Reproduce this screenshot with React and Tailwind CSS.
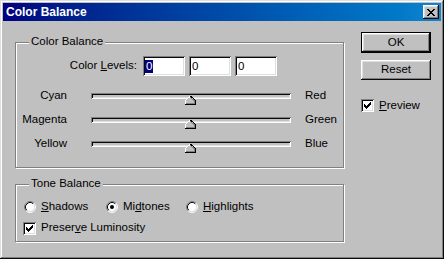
import React from 'react';

const raised =
  'shadow-[inset_-1px_-1px_0_#0a0a0a,inset_1px_1px_0_#fff,inset_-2px_-2px_0_#808080,inset_2px_2px_0_#dfdfdf]';
const sunken =
  'shadow-[inset_1px_1px_0_#808080,inset_-1px_-1px_0_#fff,inset_2px_2px_0_#0a0a0a,inset_-2px_-2px_0_#dfdfdf]';

function Group({ title, className, children }) {
  return (
    <div
      className={`relative border border-[#808080] shadow-[inset_1px_1px_0_#fff,1px_1px_0_#fff] ${className}`}
    >
      <span className="absolute left-[13px] top-[-8px] px-[2px] bg-[#c0c0c0] leading-[13px]">
        {title}
      </span>
      {children}
    </div>
  );
}

function CheckBox() {
  const cols = [2, 3, 4, 3, 2, 1, 0];
  return (
    <div className={`w-[13px] h-[13px] bg-white flex items-center justify-center ${sunken}`}>
      <svg width="7" height="7" viewBox="0 0 7 7" shapeRendering="crispEdges">
        {cols.map((y, x) => (
          <rect key={x} x={x} y={y} width="1" height="3" fill="#000" />
        ))}
      </svg>
    </div>
  );
}

function Radio({ checked }) {
  return (
    <svg width="12" height="12" viewBox="0 0 12 12">
      <circle cx="6" cy="6" r="4.5" fill="#fff" />
      <path d="M9.89 2.11 A5.5 5.5 0 0 0 2.11 9.89" stroke="#808080" fill="none" />
      <path d="M2.11 9.89 A5.5 5.5 0 0 0 9.89 2.11" stroke="#fff" fill="none" />
      <path d="M9.18 2.82 A4.5 4.5 0 0 0 2.82 9.18" stroke="#0a0a0a" fill="none" />
      <path d="M2.82 9.18 A4.5 4.5 0 0 0 9.18 2.82" stroke="#dfdfdf" fill="none" />
      {checked && <circle cx="6" cy="6" r="2" fill="#000" />}
    </svg>
  );
}

function Thumb() {
  return (
    <svg width="11" height="9" viewBox="0 0 11 9" shapeRendering="crispEdges">
      <polygon points="5.5,0 11,5 11,9 0,9 0,5" fill="#c0c0c0" />
      <polyline points="0.5,9 0.5,4.5 5.5,0" stroke="#fff" fill="none" />
      <polyline points="5.5,0 10.5,4.5 10.5,8.5 0,8.5" stroke="#000" fill="none" />
      <polyline points="5.5,1.5 9.5,5 9.5,7.5 1,7.5" stroke="#808080" fill="none" />
    </svg>
  );
}

function SliderRow({ left, right }) {
  return (
    <div className="h-[24px] flex items-center">
      <div className="w-[51px] text-right">{left}</div>
      <div className={`relative ml-[24px] w-[200px] h-[6px] bg-[#c0c0c0] ${sunken}`}>
        <div className="absolute left-[94px] top-[3px] flex">
          <Thumb />
        </div>
      </div>
      <div className="ml-[14px]">{right}</div>
    </div>
  );
}

function LevelInput({ selected }) {
  return (
    <div className={`w-[42px] h-[20px] bg-white flex items-center pl-[2px] ${sunken}`}>
      {selected ? (
        <span className="px-[1px] bg-[#000080] text-white leading-[13px]">0</span>
      ) : (
        <span className="pl-[1px] leading-[13px]">0</span>
      )}
    </div>
  );
}

export default function App() {
  return (
    <div className="w-[444px] h-[259px] bg-[#c0c0c0] p-[3px] flex flex-col shadow-[inset_-1px_-1px_0_#0a0a0a,inset_1px_1px_0_#dfdfdf,inset_-2px_-2px_0_#808080,inset_2px_2px_0_#fff] font-['Liberation_Sans',Arial,sans-serif] text-[11.5px] text-black">
      {/* title bar */}
      <div className="h-[18px] flex items-center justify-between pl-[3px] pr-[2px] bg-linear-to-r from-[#000080] to-[#1084d0]">
        <span className="text-white font-bold text-[12px]">Color Balance</span>
        <div className={`w-[16px] h-[14px] bg-[#c0c0c0] flex items-center justify-center ${raised}`}>
          <svg width="8" height="7" viewBox="0 0 8 7" shapeRendering="crispEdges">
            <rect x="0" y="0" width="2" height="1" />
            <rect x="6" y="0" width="2" height="1" />
            <rect x="1" y="1" width="2" height="1" />
            <rect x="5" y="1" width="2" height="1" />
            <rect x="2" y="2" width="4" height="1" />
            <rect x="3" y="3" width="2" height="1" />
            <rect x="2" y="4" width="4" height="1" />
            <rect x="1" y="5" width="2" height="1" />
            <rect x="5" y="5" width="2" height="1" />
            <rect x="0" y="6" width="2" height="1" />
            <rect x="6" y="6" width="2" height="1" />
          </svg>
        </div>
      </div>

      <div className="flex flex-1">
        {/* left column */}
        <div className="pl-[12px] flex flex-col">
          <Group title="Color Balance" className="mt-[21px] w-[329px] h-[126px]">
            <div className="pt-[13px] flex items-center">
              <div className="w-[121px] text-right">
                Color <u>L</u>evels:
              </div>
              <div className="ml-[6px] flex gap-[4px]">
                <LevelInput selected />
                <LevelInput />
                <LevelInput />
              </div>
            </div>
            <div className="mt-[8px] flex flex-col">
              <SliderRow left="Cyan" right="Red" />
              <SliderRow left="Magenta" right="Green" />
              <SliderRow left="Yellow" right="Blue" />
            </div>
          </Group>

          <Group title="Tone Balance" className="mt-[16px] w-[329px] h-[58px]">
            <div className="pt-[14px] pl-[8px] flex h-[30px]">
              <div className="w-[82px] flex items-center">
                <Radio />
                <span className="ml-[5px]">
                  <u>S</u>hadows
                </span>
              </div>
              <div className="w-[80px] flex items-center">
                <Radio checked />
                <span className="ml-[5px]">
                  Mi<u>d</u>tones
                </span>
              </div>
              <div className="flex items-center">
                <Radio />
                <span className="ml-[5px]">
                  <u>H</u>ighlights
                </span>
              </div>
            </div>
            <div className="mt-[5px] pl-[7px] h-[16px] flex items-center">
              <CheckBox />
              <span className="ml-[5px]">
                Preser<u>v</u>e Luminosity
              </span>
            </div>
          </Group>
        </div>

        {/* right column */}
        <div className="ml-[17px] flex flex-col">
          <button
            className={`mt-[11px] w-[70px] h-[21px] bg-[#c0c0c0] border border-black flex items-center justify-center ${raised}`}
          >
            OK
          </button>
          <button
            className={`mt-[7px] w-[70px] h-[20px] bg-[#c0c0c0] flex items-center justify-center ${raised}`}
          >
            Reset
          </button>
          <div className="mt-[17px] flex items-center">
            <CheckBox />
            <span className="ml-[5px]">
              <u>P</u>review
            </span>
          </div>
        </div>
      </div>
    </div>
  );
}
